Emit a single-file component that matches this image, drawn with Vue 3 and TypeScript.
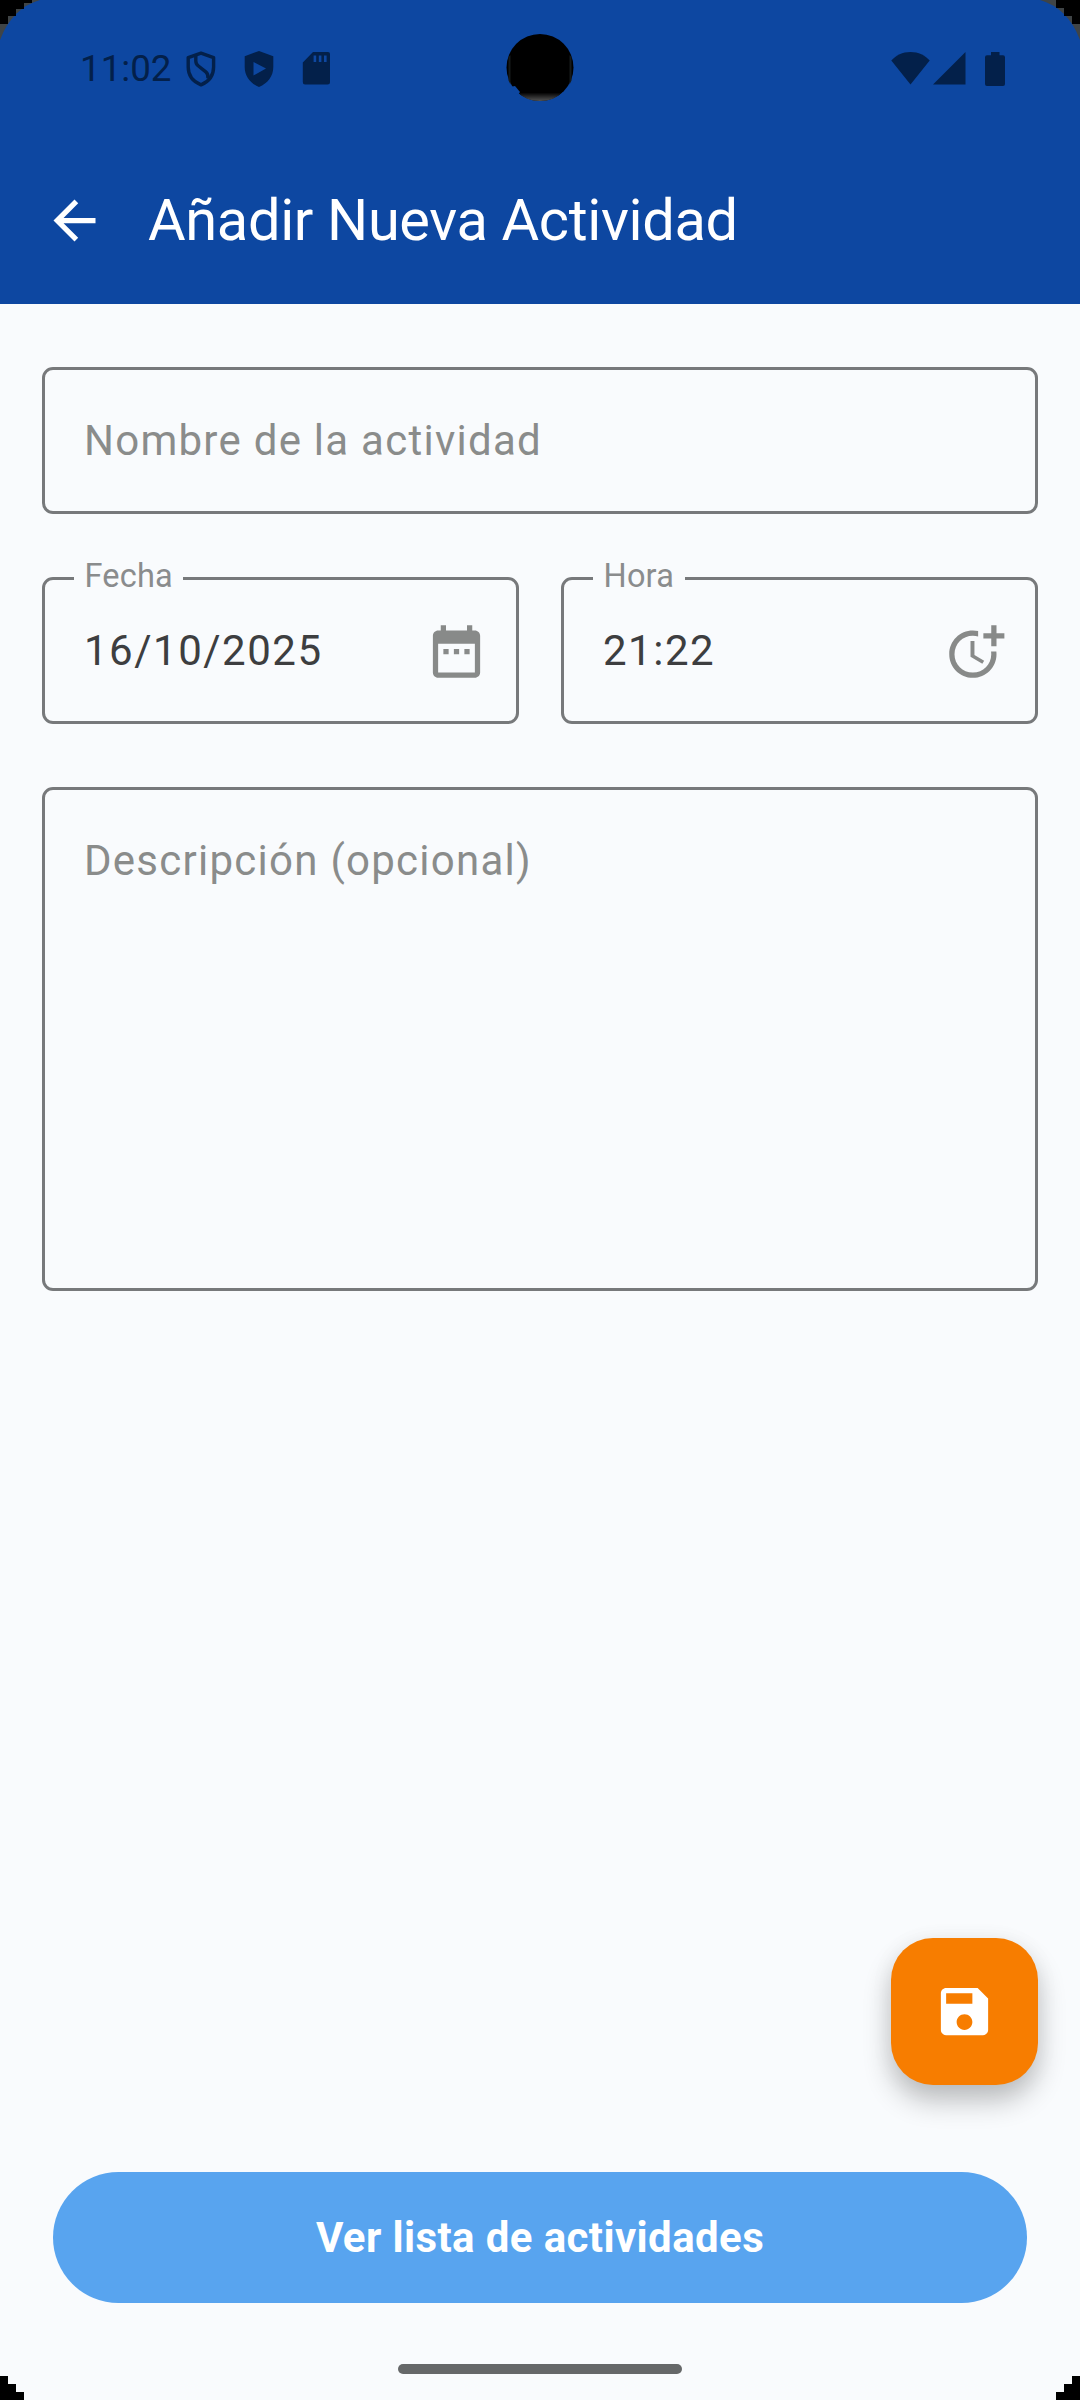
<script setup lang="ts">
import { ref } from 'vue'

const name = ref('')
const date = ref('16/10/2025')
const time = ref('21:22')
const description = ref('')
</script>

<template>
  <div class="screen">
    <header class="top">
      <div class="status">
        <span class="clock">11:02</span>
        <svg class="shield" width="30" height="36" viewBox="0 0 30 36" fill="none" stroke="#03204a" stroke-width="3.4" stroke-linejoin="round">
          <path d="M15 2.2 27.6 6.6V16c0 8-4.6 14.600-12.600 17.800C7 30.600 2.200 24 2.200 16V6.600z" />
          <path d="M9.800 4.500v5.500q0 3 2.600 5l7.400 5.800q2.700 2.200 2.200 6.700" />
        </svg>
        <svg class="play" width="30" height="36" viewBox="0 0 30 36" fill="#03204a">
          <path fill-rule="evenodd" d="M15 0 29.300 5.200V16c0 9-5.400 16.400-14.300 20C6.100 32.400.7 25 .7 16V5.200zM9.500 11v13.500L22 17.600z" />
        </svg>
        <svg class="card" width="28" height="33" viewBox="0 0 28 33" fill="#03204a">
          <path fill-rule="evenodd" d="M11 0H26q2 0 2 2V30q0 2.500-2.500 2.500H3Q.8 32.500.8 30V10.500zM11.600 3.500v6.500h2.600V3.500zM16.800 3.500v6.500h2.600V3.500zM22 3.500v6.500h2.600V3.500z" />
        </svg>
        <span class="spacer"></span>
        <svg class="wifi" width="39" height="33" viewBox="0 0 39 33" fill="#03204a">
          <path d="M19.500 32.500.3 8.500C5 3.400 11.500 0 19.500 0S34 3.400 38.700 8.500z" />
        </svg>
        <svg class="signal" width="33" height="33" viewBox="0 0 33 33" fill="#03204a">
          <path d="M0 32.600H32.500V0z" />
        </svg>
        <svg class="battery" width="20" height="34" viewBox="0 0 20 34" fill="#03204a">
          <path d="M6 0h8.500v3.300H18q2 0 2 2V32q0 2-2 2H2q-2 0-2-2V5.300q0-2 2-2h4z" />
        </svg>
        <svg class="camera" width="68" height="68" viewBox="0 0 68 68">
          <defs>
            <linearGradient id="rim" x1="0" y1="0" x2="0" y2="1">
              <stop offset="0" stop-color="#000" />
              <stop offset="1" stop-color="#555" />
            </linearGradient>
          </defs>
          <circle cx="34" cy="33.500" r="33.500" fill="#000" />
          <path d="M2.500 23v23.500l2 4V21zM65.500 23v23.500l-2 4V21z" fill="#161a1a" />
          <path d="M12 58.500h44q-8 8.500-22 8.500t-22-8.500z" fill="url(#rim)" />
          <path d="M4 53l8 8 2-3-5-6z" fill="#0d47a1" />
        </svg>
      </div>
      <div class="appbar">
        <svg width="63" height="63" viewBox="0 0 24 24" fill="#fff">
          <path d="M20 11H7.830l5.590-5.590L12 4l-8 8 8 8 1.410-1.410L7.830 13H20v-2z" />
        </svg>
        <h1>Añadir Nueva Actividad</h1>
      </div>
    </header>

    <main class="form">
      <div class="field">
        <input v-model="name" placeholder="Nombre de la actividad" />
      </div>
      <div class="row">
        <div class="field">
          <label>Fecha</label>
          <input v-model="date" readonly />
          <svg width="63" height="63" viewBox="0 0 24 24" fill="#888a89">
            <path d="M9 11H7v2h2v-2zm4 0h-2v2h2v-2zm4 0h-2v2h2v-2zm2-7h-1V2h-2v2H8V2H6v2H5c-1.110 0-1.990.9-1.990 2L3 20c0 1.100.89 2 2 2h14c1.100 0 2-.9 2-2V6c0-1.100-.9-2-2-2zm0 16H5V9h14v11z" />
          </svg>
        </div>
        <div class="field">
          <label>Hora</label>
          <input v-model="time" readonly />
          <svg width="63" height="63" viewBox="0 0 24 24" fill="#888a89">
            <path d="M10.600 8v6l4.500 2.700.7-1.200-3.700-2.200V8z" transform="translate(-.5)" />
            <path d="M17.920 12c.05.33.08.66.08 1 0 3.900-3.100 7-7 7s-7-3.100-7-7 3.100-7 7-7c.7 0 1.370.1 2 .29V4.230C12.360 4.080 11.690 4 11 4c-5 0-9 4-9 9s4 9 9 9 9-4 9-9c0-.34-.02-.67-.06-1h-2.020z" />
            <path d="M20 5V2h-2v3h-3v2h3v3h2V7h3V5z" />
          </svg>
        </div>
      </div>
      <div class="field area">
        <textarea v-model="description" placeholder="Descripción (opcional)"></textarea>
      </div>
    </main>

    <footer class="actions">
      <button class="fab" aria-label="Guardar">
        <svg width="63" height="63" viewBox="0 0 24 24" fill="#fff">
          <path d="M17 3H5c-1.110 0-2 .9-2 2v14c0 1.100.89 2 2 2h14c1.100 0 2-.9 2-2V7l-4-4zm-5 16c-1.660 0-3-1.340-3-3s1.340-3 3-3 3 1.340 3 3-1.340 3-3 3zm3-10H5V5h10v4z" />
        </svg>
      </button>
      <button class="list">Ver lista de actividades</button>
      <div class="handle"></div>
    </footer>

    <svg class="corner tl" width="41" height="41" viewBox="0 0 41 41">
      <path d="M0 0H40Q12 8 0 40z" fill="#3f4446" />
      <path d="M0 0H32V3H24V9H16V16H8V24H0z" fill="#000" />
    </svg>
    <svg class="corner tr" width="41" height="41" viewBox="0 0 41 41">
      <path d="M0 0H40Q12 8 0 40z" fill="#3f4446" />
      <path d="M0 0H24V8H16V16H8V24H0z" fill="#000" />
    </svg>
    <svg class="corner bl" width="24" height="24"><path d="M0 0H8V8H16V16H24V24H0z" /></svg>
    <svg class="corner br" width="24" height="24"><path d="M0 0H8V8H16V16H24V24H0z" /></svg>
  </div>
</template>

<style>
body {
  margin: 0;
}
</style>

<style scoped>
.screen {
  position: relative;
  display: flex;
  flex-direction: column;
  width: 1080px;
  height: 2400px;
  overflow: hidden;
  background: #f9fbfd;
  font-family: Roboto, sans-serif;
}
svg {
  display: block;
  flex: none;
}
.top {
  height: 304px;
  background: #0d47a1;
}
.status {
  position: relative;
  display: flex;
  align-items: center;
  height: 137px;
  padding: 0 75px 0 80px;
  box-sizing: border-box;
}
.clock {
  width: 106px;
  font-size: 36.750px;
  color: #03204a;
  white-space: nowrap;
}
.play {
  margin-left: 28px;
}
.card {
  margin-left: 28px;
}
.spacer {
  flex: 1;
}
.signal {
  margin-left: 3px;
}
.battery {
  margin-left: 19px;
}
.camera {
  position: absolute;
  left: 506px;
  top: 34px;
}
.appbar {
  display: flex;
  align-items: center;
  height: 167px;
  padding-left: 43px;
}
h1 {
  margin: 0 0 2px 42px;
  font-size: 57.750px;
  font-weight: 400;
  line-height: 74px;
  letter-spacing: -0.350px;
  color: #fff;
  white-space: nowrap;
}
.form {
  display: flex;
  flex-direction: column;
  flex: 1;
  gap: 63px;
  padding: 63px 42px 0;
}
.row {
  display: flex;
  gap: 42px;
}
.field {
  position: relative;
  display: flex;
  flex: 1;
  align-items: center;
  box-sizing: border-box;
  height: 147px;
  min-width: 0;
  padding: 0 28px 0 39px;
  border: 3px solid #77797b;
  border-radius: 11px;
}
.form > .field {
  flex: none;
}
.form > .area {
  height: 504px;
  align-items: flex-start;
}
.field svg {
  margin-top: 2px;
}
.field label {
  position: absolute;
  left: 29px;
  top: -22px;
  padding: 0 10.500px;
  background: #f9fbfd;
  font-size: 32.500px;
  line-height: 37px;
  letter-spacing: 0.200px;
  color: #8a8c8d;
}
input,
textarea {
  flex: 1;
  min-width: 0;
  padding: 0;
  border: 0;
  outline: 0;
  background: none;
  font: 400 42px/63px Roboto, sans-serif;
  letter-spacing: 1.500px;
  color: #3d3e40;
  resize: none;
}
textarea {
  height: 420px;
  margin-top: 39px;
}
input::placeholder,
textarea::placeholder {
  color: #8a8c8b;
  letter-spacing: 1.260px;
  opacity: 1;
}
.actions {
  display: flex;
  flex-direction: column;
  align-items: center;
  height: 462px;
}
button {
  border: 0;
  padding: 0;
}
.fab {
  display: flex;
  align-items: center;
  justify-content: center;
  align-self: flex-end;
  width: 147px;
  height: 147px;
  margin-right: 42px;
  border-radius: 42px;
  background: #f77d00;
  box-shadow: 0 16px 28px rgba(0, 0, 0, 0.24), 0 3px 24px rgba(0, 0, 0, 0.05);
}
.list {
  width: 974px;
  height: 131px;
  margin-top: 87px;
  border-radius: 66px;
  background: #58a4ef;
  font: 700 42px/63px Roboto, sans-serif;
  letter-spacing: 0.390px;
  color: #fff;
}
.handle {
  width: 284px;
  height: 10px;
  margin-top: 61px;
  border-radius: 5px;
  background: #666869;
}
.corner {
  position: absolute;
}
.tl {
  left: 0;
  top: 0;
}
.tr {
  right: 0;
  top: 0;
  transform: scaleX(-1);
}
.bl {
  left: 0;
  bottom: 0;
}
.br {
  right: 0;
  bottom: 0;
  transform: scaleX(-1);
}
</style>
